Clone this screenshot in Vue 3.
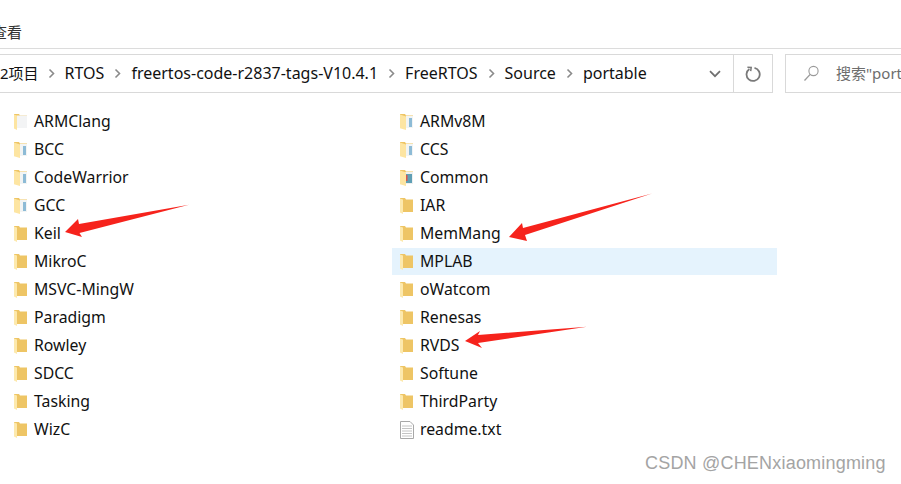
<script setup>
const left = [
  ['ARMClang', 'white'], ['BCC', 'blue'], ['CodeWarrior', 'blue'], ['GCC', 'blue'], ['Keil', 'plain'], ['MikroC', 'plain'],
  ['MSVC-MingW', 'plain'], ['Paradigm', 'plain'], ['Rowley', 'plain'], ['SDCC', 'plain'], ['Tasking', 'plain'], ['WizC', 'plain']
]
const right = [
  ['ARMv8M', 'blue'], ['CCS', 'blue'], ['Common', 'color'], ['IAR', 'plain'], ['MemMang', 'plain'], ['MPLAB', 'plain', true],
  ['oWatcom', 'plain'], ['Renesas', 'plain'], ['RVDS', 'plain'], ['Softune', 'plain'], ['ThirdParty', 'plain'], ['readme.txt', 'file']
]
const columns = [left, right]
const crumbs = ['RTOS', 'freertos-code-r2837-tags-V10.4.1', 'FreeRTOS', 'Source', 'portable']
</script>

<template>
  <div class="page">
    <div class="ribbon"><span class="tab">查看</span></div>
    <div class="navbar">
      <div class="address">
        <div class="crumbs">
          <span class="crumb first">2项目</span>
          <template v-for="c in crumbs" :key="c">
            <svg class="sep" width="7" height="11" viewBox="0 0 7 11"><path d="M1.500 1.500 5.500 5.500 1.500 9.500" fill="none" stroke="#8a8a8a" stroke-width="1.600"/></svg>
            <span class="crumb">{{ c }}</span>
          </template>
        </div>
        <div class="drop">
          <svg width="12" height="8" viewBox="0 0 12 8"><path d="M1 1.200 6 6.200 11 1.200" fill="none" stroke="#6f6f6f" stroke-width="1.700"/></svg>
        </div>
        <div class="refresh">
          <svg width="16" height="16" viewBox="0 0 16 16"><path d="M4.400 2.900A6.600 6.600 0 1 0 9.500 1.900" fill="none" stroke="#7a7a7a" stroke-width="1.800"/><path d="M2.400 1.200 6.200 1.400 5.700 5.200" fill="none" stroke="#7a7a7a" stroke-width="1.500"/></svg>
        </div>
      </div>
      <div class="search">
        <svg class="glass" width="17" height="17" viewBox="0 0 17 17"><circle cx="10.500" cy="6" r="4.600" fill="none" stroke="#9a9a9a" stroke-width="1.100"/><path d="M7.200 9.400 1.500 15.500" stroke="#9a9a9a" stroke-width="1.300"/></svg>
        <span class="search-text">搜索"portable"</span>
      </div>
    </div>
    <div class="list">
      <div v-for="(col, i) in columns" :key="i" class="col">
        <div v-for="item in col" :key="item[0]" class="row" :class="{ selected: item[2] }">
          <svg v-if="item[1] === 'file'" class="icon" width="16" height="18" viewBox="0 0 16 18">
            <path d="M1.500.5H11L14.500 4V17.500H1.500Z" fill="#fff" stroke="#a8a8a8"/>
            <path d="M3 5H13M3 7.500H13M3 10H13M3 12.500H13M3 15H13" stroke="#c4c4c4"/>
          </svg>
          <svg v-else class="icon" width="16" height="18" viewBox="0 0 16 18">
            <path d="M1 1H6L7 2.500H14V15H1Z" fill="#eec565"/>
            <template v-if="item[1] === 'plain'">
              <path d="M1 1.400 4 2.600V17L1 15.400Z" fill="#fde9ad"/>
            </template>
            <template v-else>
              <rect v-if="item[1] === 'white'" x="4" y="2.500" width="10" height="12.500" fill="#f3f4f5"/>
              <rect v-if="item[1] === 'blue'" x="7" y="3" width="7" height="12" fill="#f2f4f4"/>
              <rect v-if="item[1] === 'blue'" x="10" y="5" width="3" height="9" fill="#8dbbd6"/>
              <rect v-if="item[1] === 'color'" x="6" y="3" width="8" height="12" fill="#eef0f0"/>
              <rect v-if="item[1] === 'color'" x="7" y="5" width="6" height="9" fill="#5f9fb5"/>
              <rect v-if="item[1] === 'color'" x="6" y="6" width="2.500" height="6" fill="#d8584c"/>
              <path :d="item[1] === 'white' ? 'M1 1.400 4 2.600V17L1 15.400Z' : 'M1 1.400 7 3.600V17L1 15.200Z'" fill="#fde5a2"/>
            </template>
          </svg>
          <span class="name">{{ item[0] }}</span>
        </div>
      </div>
    </div>
    <svg class="arrows" width="901" height="484" viewBox="0 0 901 484">
      <path d="M189 204.800 79 224 78 219 65 232 82 237 79.500 233Z" fill="#f6231c"/>
      <path d="M652 193.500 523 228 522 223 509 237 527 241 525 235Z" fill="#f6231c"/>
      <path d="M587 326.800 478 335 480 331 465 341 482 348 478 343Z" fill="#f6231c"/>
    </svg>
    <span class="mark">CSDN @CHENxiaomingming</span>
  </div>
</template>

<style scoped>
.page {
  position: relative;
  width: 901px;
  height: 484px;
  overflow: hidden;
  background: #fff;
  font-family: "Noto Sans", "Noto Sans CJK SC", sans-serif;
  font-size: 15.8px;
  color: #111;
}
.ribbon {
  height: 49px;
  border-bottom: 1px solid #dcdcdc;
  box-sizing: border-box;
  padding-top: 21px;
  line-height: 22px;
}
.tab { margin-left: -8px; font-size: 15px; color: #333; }
.navbar {
  display: flex;
  gap: 12px;
  margin-top: 5px;
  height: 39px;
}
.address {
  width: 774px;
  margin-left: -1px;
  box-sizing: border-box;
  border: 1px solid #d9d9d9;
  border-width: 1px 1px 1px 0;
  display: flex;
  align-items: center;
}
.crumbs { flex: 1; display: flex; align-items: center; gap: 10px; padding-left: 1px; white-space: nowrap; font-size: 16px; }
.crumb { line-height: 20px; padding-bottom: 2px; }
.crumb.first { font-size: 15px; margin-right: -1px; }
.sep { flex: none; }
.drop { width: 36px; height: 100%; display: flex; align-items: center; justify-content: center; }
.refresh { width: 38px; height: 100%; border-left: 1px solid #d9d9d9; display: flex; align-items: center; justify-content: center; }
.search {
  flex: 1;
  box-sizing: border-box;
  border: 1px solid #d9d9d9;
  border-right: 0;
  display: flex;
  align-items: center;
  gap: 16px;
  padding-left: 17px;
  white-space: nowrap;
  overflow: hidden;
  color: #6d6d6d;
  font-size: 15px;
}
.search-text { padding-bottom: 2px; }
.glass { flex: none; }
.list {
  display: grid;
  grid-template-columns: 386px 385px;
  margin-top: 15px;
  padding-left: 6px;
}
.col { display: flex; flex-direction: column; gap: 1px; }
.row {
  height: 27px;
  display: flex;
  align-items: center;
  padding-left: 7px;
  box-sizing: border-box;
}
.row.selected { background: #e5f3fd; }
.icon { flex: none; }
.name { margin-left: 5px; padding-bottom: 2px; }
.arrows { position: absolute; left: 0; top: 0; pointer-events: none; }
.mark {
  position: absolute;
  left: 645px;
  top: 453px;
  font-family: "Liberation Sans", sans-serif;
  font-size: 18px;
  letter-spacing: .2px;
  color: #a4a4a4;
  white-space: nowrap;
}
</style>
